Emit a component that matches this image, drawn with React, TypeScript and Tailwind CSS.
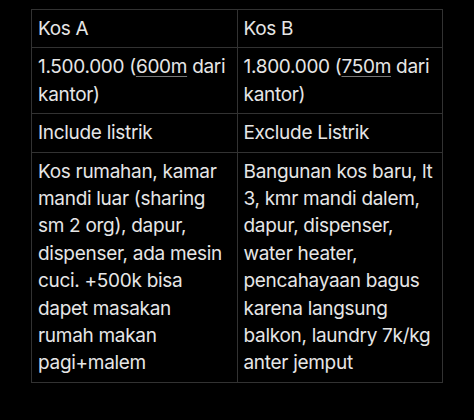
const Link = ({ children }: { children: React.ReactNode }) => (
  <span className="underline decoration-[#777] decoration-1 underline-offset-[3px]">{children}</span>
)

const lines = (ls: string[]) =>
  ls.map((l, i) => (
    <span key={i} className="block whitespace-nowrap">
      {l}
    </span>
  ))

const rows: [React.ReactNode, React.ReactNode][] = [
  ['Kos A', 'Kos B'],
  [
    <>
      <span className="block whitespace-nowrap">
        1.500.000 (<Link>600m</Link> dari
      </span>
      <span className="block">kantor)</span>
    </>,
    <>
      <span className="block whitespace-nowrap">
        1.800.000 (<Link>750m</Link> dari
      </span>
      <span className="block">kantor)</span>
    </>,
  ],
  ['Include listrik', 'Exclude Listrik'],
  [
    lines([
      'Kos rumahan, kamar',
      'mandi luar (sharing',
      'sm 2 org), dapur,',
      'dispenser, ada mesin',
      'cuci. +500k bisa',
      'dapet masakan',
      'rumah makan',
      'pagi+malem',
    ]),
    lines([
      'Bangunan kos baru, lt',
      '3, kmr mandi dalem,',
      'dapur, dispenser,',
      'water heater,',
      'pencahayaan bagus',
      'karena langsung',
      'balkon, laundry 7k/kg',
      'anter jemput',
    ]),
  ],
]

export default function App() {
  return (
    <div className="min-h-[420px] w-[474px] bg-black pl-[31px] pt-[9px] font-['Inter',sans-serif] text-[19px] leading-[27.4px] text-[#e6e6e6]">
      <table className="w-[412px] table-fixed border-collapse">
        <tbody>
          {rows.map((r, i) => (
            <tr key={i}>
              {r.map((c, j) => (
                <td
                  key={j}
                  className="border border-[#323232] px-[6px] py-[5px] align-top tracking-[-0.3px]"
                >
                  {c}
                </td>
              ))}
            </tr>
          ))}
        </tbody>
      </table>
    </div>
  )
}
